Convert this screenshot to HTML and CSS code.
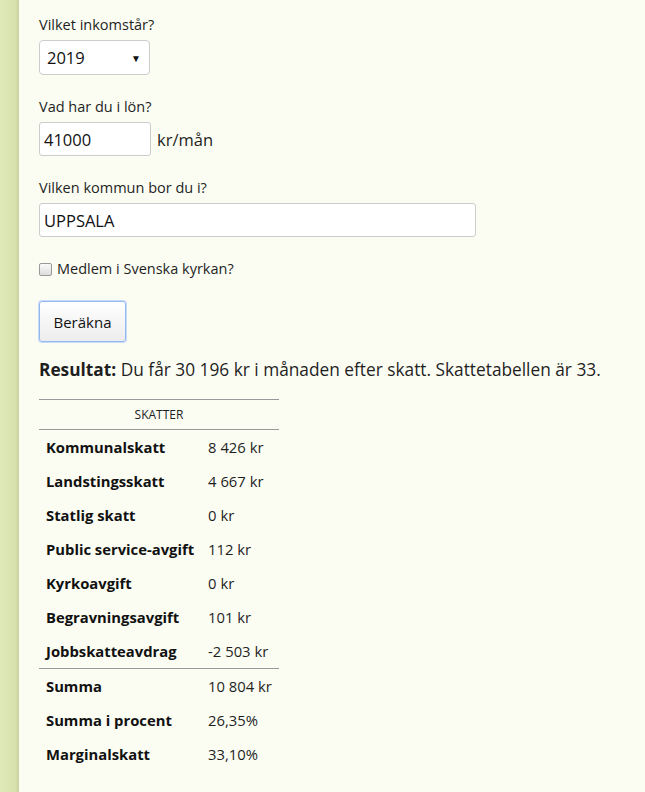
FILE: index.html
```html
<!DOCTYPE html>
<html lang="sv">
<head>
  <meta charset="UTF-8">
  <meta name="viewport" content="width=device-width, initial-scale=1.0">
  <title>Lön efter skatt</title>
  <link rel="stylesheet" href="styles.css">
</head>
<body>
  <div class="page">
    <aside class="side"></aside>
    <main class="content">
      <div class="field">
        <label>Vilket inkomstår?</label>
        <div class="select">2019 <span class="caret">&#9660;</span></div>
      </div>

      <div class="field">
        <label>Vad har du i lön?</label>
        <div class="inline">
          <input class="input salary" value="41000">
          <span class="unit">kr/mån</span>
        </div>
      </div>

      <div class="field">
        <label>Vilken kommun bor du i?</label>
        <input class="input town" value="UPPSALA">
      </div>

      <div class="check">
        <span class="box"></span>
        <span>Medlem i Svenska kyrkan?</span>
      </div>

      <button class="btn">Beräkna</button>

      <p class="result"><strong>Resultat:</strong> Du får 30 196 kr i månaden efter skatt. Skattetabellen är 33.</p>

      <table class="taxes">
        <thead>
          <tr><th colspan="2">Skatter</th></tr>
        </thead>
        <tbody>
          <tr><td>Kommunalskatt</td><td>8 426 kr</td></tr>
          <tr><td>Landstingsskatt</td><td>4 667 kr</td></tr>
          <tr><td>Statlig skatt</td><td>0 kr</td></tr>
          <tr><td>Public service-avgift</td><td>112 kr</td></tr>
          <tr><td>Kyrkoavgift</td><td>0 kr</td></tr>
          <tr><td>Begravningsavgift</td><td>101 kr</td></tr>
          <tr><td>Jobbskatteavdrag</td><td>-2 503 kr</td></tr>
        </tbody>
        <tfoot>
          <tr><td>Summa</td><td>10 804 kr</td></tr>
          <tr><td>Summa i procent</td><td>26,35%</td></tr>
          <tr><td>Marginalskatt</td><td>33,10%</td></tr>
        </tfoot>
      </table>
    </main>
  </div>
</body>
</html>
```

FILE: styles.css
```css
html, body {
  margin: 0;
  padding: 0;
  background: #fbfdf3;
}

body {
  font-family: 'Open Sans', sans-serif;
  color: #1f1f1f;
}

.page {
  display: flex;
  min-height: 792px;
}

.side {
  width: 19px;
  flex-shrink: 0;
  background: linear-gradient(90deg, #dfe8b8, #d8e2ad 80%, #c9d19f);
}

.content {
  padding: 15px 0 20px 20px;
}

.field {
  margin-bottom: 22px;
}

.field label {
  display: block;
  font-size: 14.5px;
  line-height: 20px;
  margin-bottom: 5px;
}

.select {
  width: 111px;
  height: 35px;
  box-sizing: border-box;
  padding: 0 8px 0 7px;
  display: flex;
  align-items: center;
  justify-content: space-between;
  background: #fff;
  border: 1px solid #ccc;
  border-radius: 4px;
  font-size: 16.5px;
  color: #111;
}

.caret {
  font-size: 10px;
  margin-top: 1px;
}

.inline {
  display: flex;
  align-items: center;
  gap: 6px;
}

.input {
  box-sizing: border-box;
  height: 34px;
  padding: 0 4px;
  background: #fff;
  border: 1px solid #ccc;
  border-radius: 3px;
  font-family: 'Open Sans', sans-serif;
  font-size: 16.5px;
  color: #111;
}

.salary {
  width: 112px;
}

.town {
  width: 437px;
}

.unit {
  font-size: 16.5px;
}

.check {
  display: flex;
  align-items: center;
  gap: 5px;
  font-size: 14.5px;
  line-height: 20px;
  margin: 0 0 22px;
}

.box {
  width: 11px;
  height: 11px;
  border: 1px solid #999;
  border-radius: 2px;
  background: linear-gradient(#fafafa, #ddd);
}

.btn {
  display: block;
  width: 87px;
  height: 41px;
  background: linear-gradient(#fff, #ececec);
  border: 1px solid #96b8f0;
  border-radius: 3px;
  font-family: 'Open Sans', sans-serif;
  font-size: 15px;
  color: #111;
  box-shadow: 0 0 0 1px #c7daf8;
}

.result {
  font-size: 17.3px;
  line-height: 23px;
  margin: 16px 0 18px;
}

.taxes {
  width: 240px;
  border-collapse: collapse;
  font-size: 14.8px;
}

.taxes th {
  height: 29px;
  padding: 0;
  font-size: 12px;
  font-weight: normal;
  text-transform: uppercase;
  border-top: 1px solid #999;
  border-bottom: 1px solid #999;
}

.taxes td {
  height: 34px;
  padding: 0 7px;
  white-space: nowrap;
}

.taxes td:first-child {
  width: 147px;
  font-weight: bold;
  color: #111;
}

.taxes tfoot tr:first-child td {
  border-top: 1px solid #999;
}
```
